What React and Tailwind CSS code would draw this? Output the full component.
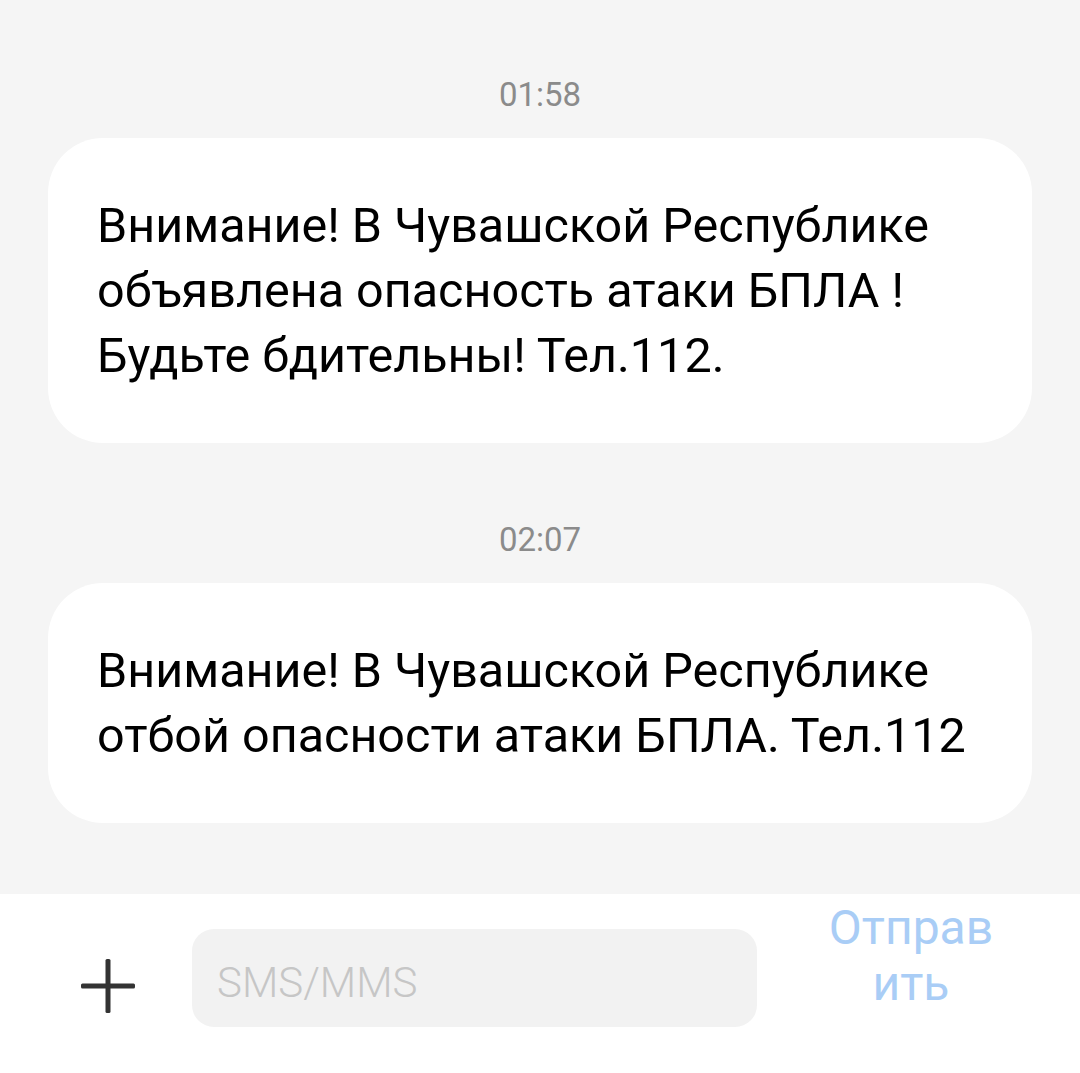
import React from "react";

function Stamp({ children, className = "" }) {
  return (
    <div className={`h-[40px] text-center text-[33px] leading-[40px] text-[#8b8b8b] ${className}`}>
      {children}
    </div>
  );
}

function Bubble({ lines, className = "" }) {
  return (
    <div className={`rounded-[55px] bg-white pl-[49px] pr-[30px] py-[55px] text-[48.5px] leading-[65px] text-black ${className}`}>
      {lines.map((l, i) => (
        <div key={i} className="whitespace-nowrap">{l}</div>
      ))}
    </div>
  );
}

export default function App() {
  return (
    <div
      className="flex h-[1073px] w-full flex-col overflow-hidden bg-[#f5f5f5]"
      style={{ fontFamily: "Roboto, 'Noto Sans', sans-serif" }}
    >
      <div className="flex-1 px-[48px] pt-[75px]">
        <Stamp>01:58</Stamp>
        <Bubble
          className="mt-[23px]"
          lines={[
            "Внимание! В Чувашской Республике",
            "объявлена опасность атаки БПЛА !",
            "Будьте бдительны! Тел.112.",
          ]}
        />
        <Stamp className="mt-[77px]">02:07</Stamp>
        <Bubble
          className="mt-[23px]"
          lines={[
            "Внимание! В Чувашской Республике",
            "отбой опасности атаки БПЛА. Тел.112",
          ]}
        />
      </div>
      <div className="flex h-[179px] items-start bg-white">
        <svg className="ml-[81px] mt-[65px] h-[54px] w-[54px]" viewBox="0 0 54 54">
          <rect x="24.5" y="0" width="5" height="54" rx="1.5" fill="#333333" />
          <rect x="0" y="24.5" width="54" height="5" rx="1.5" fill="#333333" />
        </svg>
        <div className="ml-[57px] mt-[35px] flex h-[98px] w-[565px] items-center rounded-[22px] bg-[#f2f2f2] pl-[25px] pt-[8px] text-[42px] font-light text-[#c6c6c6]">
          SMS/MMS
        </div>
        <div className="ml-[54px] mt-[6px] w-[200px] text-center text-[48px] leading-[56px] text-[#a9cdf6]">
          <div>Отправ</div>
          <div>ить</div>
        </div>
      </div>
    </div>
  );
}
